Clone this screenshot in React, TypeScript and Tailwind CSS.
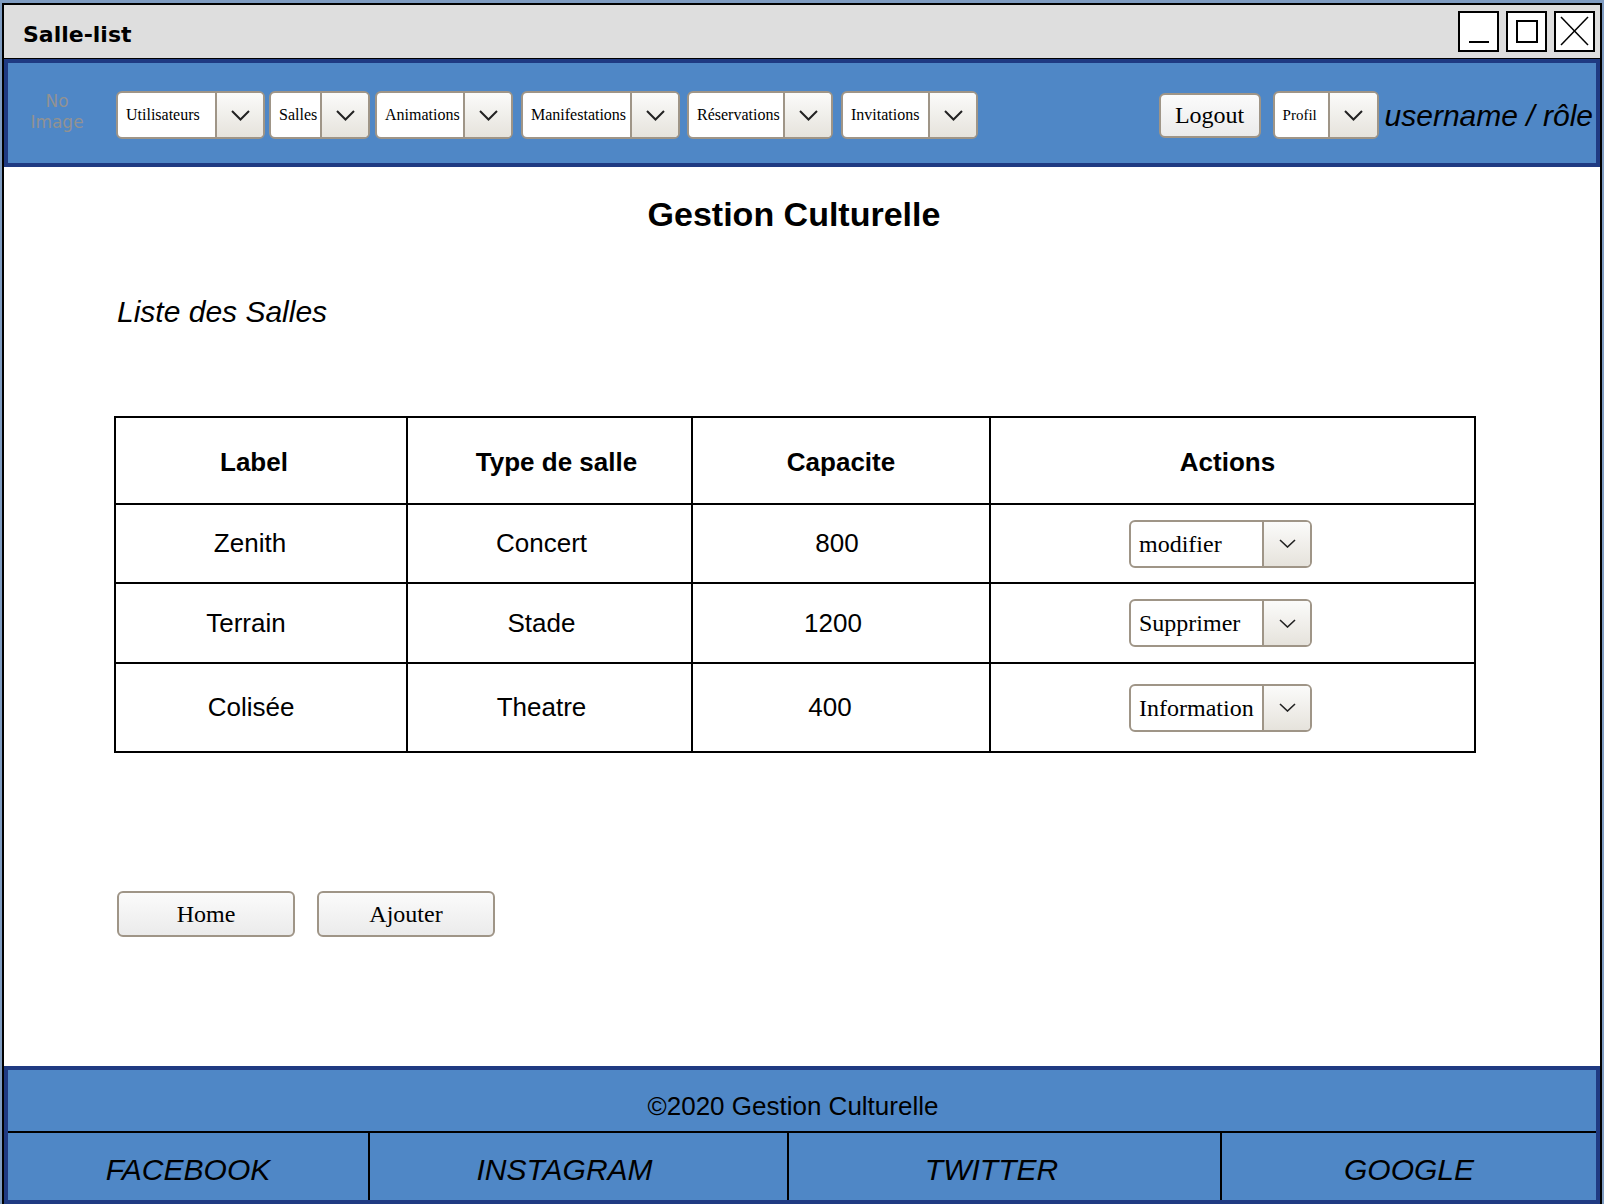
import React from 'react';

// Menus de la barre de navigation (largeur de la partie texte + marge gauche)
const navMenus = [
    { label: 'Utilisateurs', left: 'w-[97px]', ml: 'ml-[10px]' },
    { label: 'Salles', left: 'w-[49px]', ml: 'ml-[4px]' },
    { label: 'Animations', left: 'w-[86px]', ml: 'ml-[5px]' },
    { label: 'Manifestations', left: 'w-[107px]', ml: 'ml-[8px]' },
    { label: 'Réservations', left: 'w-[94px]', ml: 'ml-[7px]' },
    { label: 'Invitations', left: 'w-[85px]', ml: 'ml-[8px]' },
];

const salles = [
    { label: 'Zenith', type: 'Concert', capacite: 800, action: 'modifier', h: 'h-[79px]', c1: 'pr-[22px]', c3: 'pr-[8px]' },
    { label: 'Terrain', type: 'Stade', capacite: 1200, action: 'Supprimer', h: 'h-[80px]', c1: 'pr-[30px]', c3: 'pr-[16px]' },
    { label: 'Colisée', type: 'Theatre', capacite: 400, action: 'Information', h: 'h-[89px]', c1: 'pr-[20px]', c3: 'pr-[22px]' },
];

const footerLinks = [
    { label: 'FACEBOOK', cls: 'w-[360px]' },
    { label: 'INSTAGRAM', cls: 'w-[419px] border-l-2 border-black pr-[28px]' },
    { label: 'TWITTER', cls: 'w-[433px] border-l-2 border-black pr-[26px]' },
    { label: 'GOOGLE', cls: 'flex-1 border-l-2 border-black' },
];

const Chevron = ({ small }: { small?: boolean }) =>
    small ? (
        <svg width="17" height="9" viewBox="0 0 17 9" fill="none">
            <polyline points="1,1 8.5,8 16,1" stroke="#222" strokeWidth="1.6" />
        </svg>
    ) : (
        <svg width="19" height="11" viewBox="0 0 19 11" fill="none">
            <polyline points="1,1 9.5,9.5 18,1" stroke="#222" strokeWidth="2" />
        </svg>
    );

const Dropdown = ({ label, left, right = 'w-[48px]', height = 'h-[48px]', text = 'text-[16px]', small }: {
    label: string; left: string; right?: string; height?: string; text?: string; small?: boolean;
}) => (
    <div className={`flex ${height} border-2 border-[#9f9587] rounded-[6px] overflow-hidden bg-white`}>
        <div className={`${left} ${text} flex items-center pl-[8px] whitespace-nowrap overflow-hidden text-black font-['Liberation_Serif',serif]`}>
            {label}
        </div>
        <div className={`${right} border-l-2 border-[#9f9587] bg-gradient-to-b from-[#fbfbfa] to-[#e6e3dc] flex items-center justify-center`}>
            <Chevron small={small} />
        </div>
    </div>
);

const GrayButton = ({ label, cls }: { label: string; cls: string }) => (
    <button className={`${cls} border-2 border-[#9f9587] rounded-[6px] bg-gradient-to-b from-[#fbfbfb] to-[#ebebeb] text-[24px] text-black font-['Liberation_Serif',serif] flex items-center justify-center`}>
        {label}
    </button>
);

export default function App() {
    return (
        <div className="w-[1604px] h-[1204px] bg-[#7f9cc1] pt-[3px] px-[2px] font-['Liberation_Sans',Arial,sans-serif] overflow-hidden">
            <div className="h-[1201px] border-2 border-b-0 border-black bg-white flex flex-col">
                {/* Barre de titre */}
                <div className="h-[54px] shrink-0 bg-[#dedede] border-b border-black flex items-center justify-between pl-[19px] pr-[5px]">
                    <span className="pt-[5px] text-[22px] font-bold text-black font-['DejaVu_Sans',sans-serif]">Salle-list</span>
                    <div className="flex gap-[7px]">
                        <div className="w-[41px] h-[41px] border-2 border-black bg-white">
                            <svg width="37" height="37" viewBox="0 0 37 37"><line x1="9" y1="29" x2="29" y2="29" stroke="#000" strokeWidth="2" /></svg>
                        </div>
                        <div className="w-[41px] h-[41px] border-2 border-black bg-white">
                            <svg width="37" height="37" viewBox="0 0 37 37"><rect x="9" y="8" width="20" height="21" fill="none" stroke="#000" strokeWidth="2" /></svg>
                        </div>
                        <div className="w-[41px] h-[41px] border-2 border-black bg-white">
                            <svg width="37" height="37" viewBox="0 0 37 37">
                                <line x1="5" y1="4" x2="32" y2="32" stroke="#000" strokeWidth="1.5" />
                                <line x1="32" y1="4" x2="5" y2="32" stroke="#000" strokeWidth="1.5" />
                            </svg>
                        </div>
                    </div>
                </div>

                {/* Navigation */}
                <div className="h-[108px] shrink-0 bg-[#4f87c6] border-4 border-[#1f3a82] flex items-center pt-[4px] pr-[3px]">
                    <div className="w-[98px] mb-[6px] text-center text-[17px] leading-[21px] text-[#929292] font-['DejaVu_Sans',sans-serif]">
                        No<br />Image
                    </div>
                    {navMenus.map(m => (
                        <div key={m.label} className={m.ml}>
                            <Dropdown label={m.label} left={m.left} />
                        </div>
                    ))}
                    <div className="ml-auto flex items-center">
                        <GrayButton label="Logout" cls="w-[102px] h-[45px]" />
                        <div className="ml-[12px]">
                            <Dropdown label="Profil" left="w-[53px]" right="w-[49px]" text="text-[15px]" />
                        </div>
                        <span className="ml-[6px] text-[30px] italic text-black whitespace-nowrap">username / rôle</span>
                    </div>
                </div>

                {/* Contenu */}
                <div className="flex-1 flex flex-col">
                    <h1 className="mt-[30px] pr-[16px] text-center text-[34px] leading-none font-bold text-black">Gestion Culturelle</h1>
                    <h2 className="mt-[66px] pl-[113px] text-[30px] leading-none italic text-black">Liste des Salles</h2>

                    <table className="mt-[89px] ml-[110px] w-[1360px] table-fixed border-collapse border-2 border-black text-[26px] text-black">
                        <colgroup>
                            <col className="w-[292px]" />
                            <col className="w-[285px]" />
                            <col className="w-[298px]" />
                            <col className="w-[485px]" />
                        </colgroup>
                        <thead>
                            <tr className="h-[87px]">
                                <th className="border-2 border-black font-bold pt-[4px] pr-[14px]">Label</th>
                                <th className="border-2 border-black font-bold pt-[4px] pl-[14px]">Type de salle</th>
                                <th className="border-2 border-black font-bold pt-[4px]">Capacite</th>
                                <th className="border-2 border-black font-bold pt-[4px] pr-[10px]">Actions</th>
                            </tr>
                        </thead>
                        <tbody>
                            {salles.map(s => (
                                <tr key={s.label} className={s.h}>
                                    <td className={`border-2 border-black text-center ${s.c1}`}>{s.label}</td>
                                    <td className="border-2 border-black text-center pr-[16px]">{s.type}</td>
                                    <td className={`border-2 border-black text-center ${s.c3}`}>{s.capacite}</td>
                                    <td className="border-2 border-black">
                                        <div className="flex justify-center pr-[24px]">
                                            <Dropdown label={s.action} left="w-[131px]" text="text-[24px]" small />
                                        </div>
                                    </td>
                                </tr>
                            ))}
                        </tbody>
                    </table>

                    <div className="mt-[138px] ml-[113px] flex gap-[22px]">
                        <GrayButton label="Home" cls="w-[178px] h-[46px]" />
                        <GrayButton label="Ajouter" cls="w-[178px] h-[46px]" />
                    </div>
                </div>

                {/* Pied de page */}
                <div className="h-[138px] shrink-0 bg-[#4f87c6] border-4 border-[#1f3a82] flex flex-col text-black">
                    <div className="h-[63px] border-b-2 border-black flex items-center justify-center pt-[11px] pr-[18px] text-[26px]">
                        ©2020 Gestion Culturelle
                    </div>
                    <div className="flex-1 flex">
                        {footerLinks.map(l => (
                            <div key={l.label} className={`${l.cls} flex items-center justify-center pt-[5px] text-[30px] italic`}>
                                {l.label}
                            </div>
                        ))}
                    </div>
                </div>
            </div>
        </div>
    );
}
